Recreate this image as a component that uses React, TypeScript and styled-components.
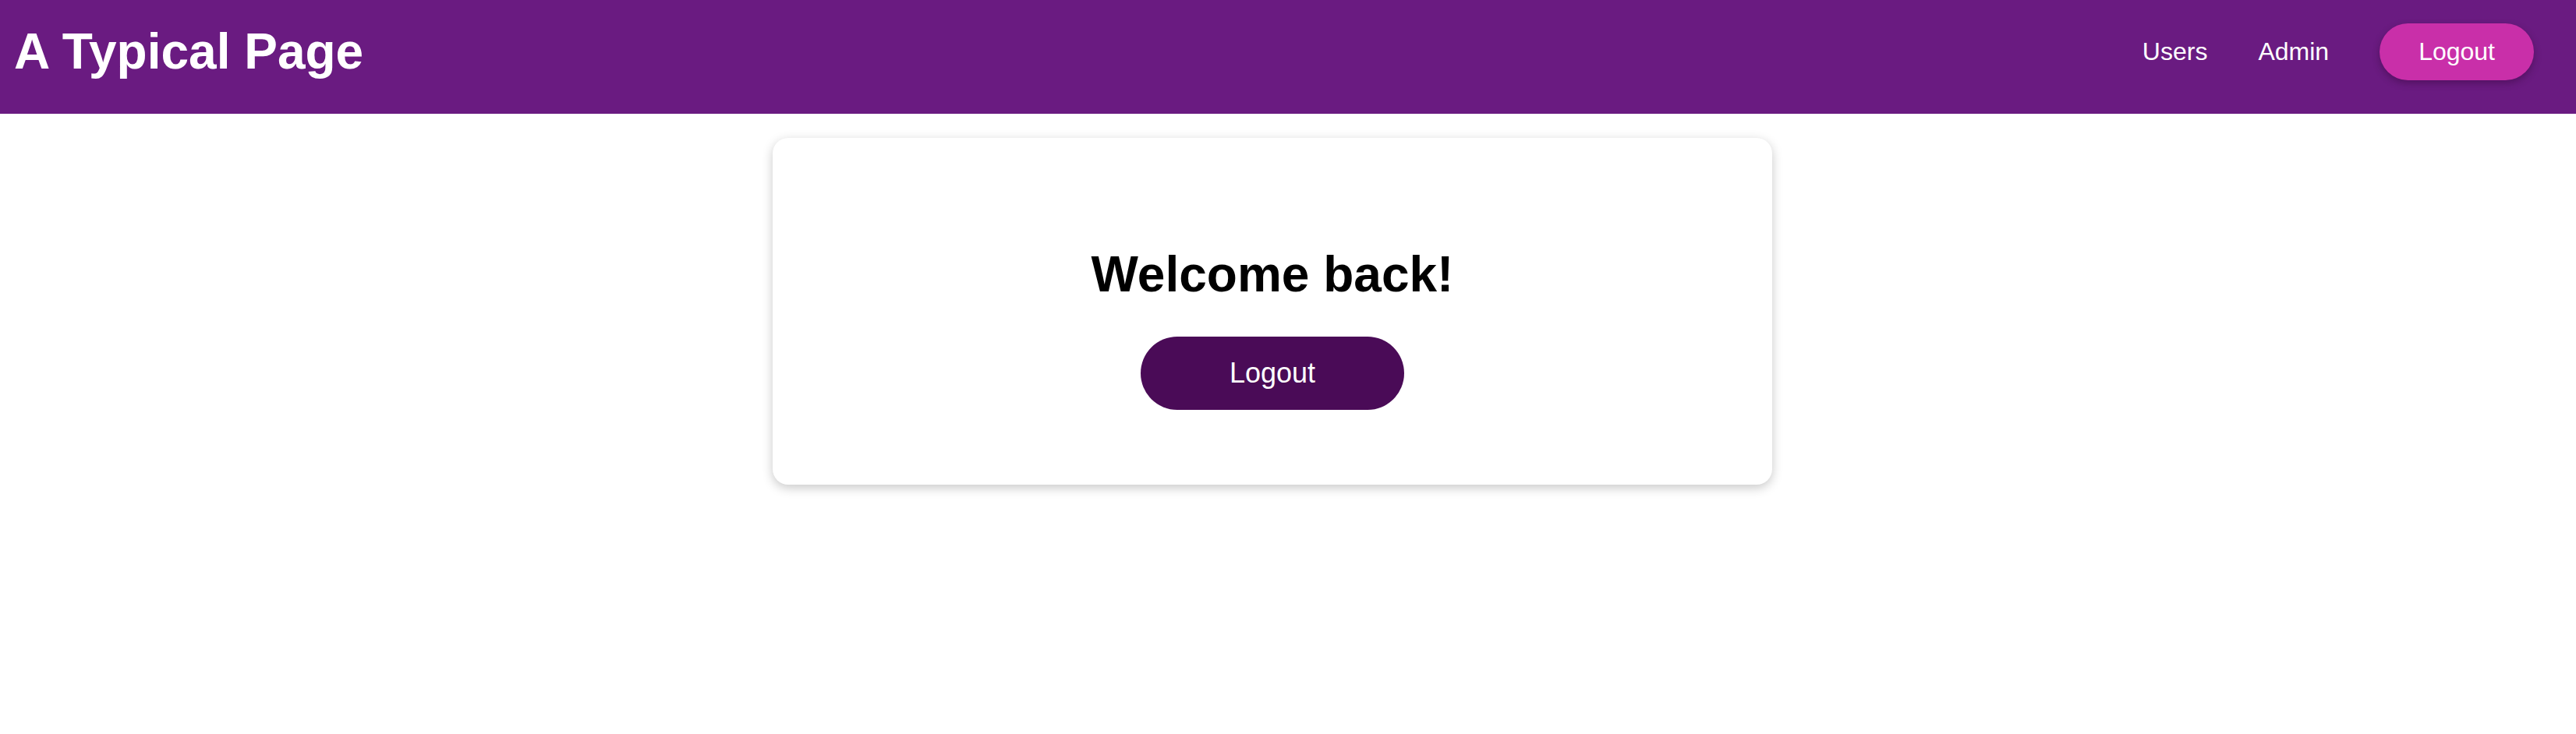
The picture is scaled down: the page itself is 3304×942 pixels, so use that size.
import styled, { createGlobalStyle } from "styled-components";

const GlobalStyle = createGlobalStyle`
    body {
        margin: 0;
        background: #ffffff;
        font-family: "Liberation Sans", Arial, sans-serif;
    }
`

const Page = styled.div`
    min-height: 100vh;
    background: #ffffff;
`

const Header = styled.header`
    height: 146px;
    box-sizing: border-box;
    background-color: #6a1b81;
    display: flex;
    align-items: center;
    justify-content: space-between;
    padding: 0 54px 14px 18px;
    color: #ffffff;
`

const Title = styled.h1`
    margin: 0;
    font-size: 64px;
    font-weight: 700;
`

const Nav = styled.nav`
    display: flex;
    align-items: center;
    gap: 65px;
`

const NavLink = styled.a`
    color: #ffffff;
    text-decoration: none;
    font-size: 32px;
`

const PillButton = styled.button`
    border: none;
    border-radius: 999px;
    background-color: #c92fa9;
    color: #ffffff;
    font-family: inherit;
    font-size: 32px;
    padding: 18px 50px;
    cursor: pointer;
    box-shadow: 0 4px 10px rgba(40, 0, 40, 0.35);
`

const Main = styled.main`
    display: flex;
    justify-content: center;
    padding: 31px 40px 0 0;
`

const Card = styled.section`
    width: 1282px;
    box-sizing: border-box;
    background: #ffffff;
    border-radius: 20px;
    box-shadow: 0 4px 14px rgba(0, 0, 0, 0.22);
    padding: 96px 0;
    display: flex;
    flex-direction: column;
    align-items: center;
`

const Welcome = styled.h2`
    margin: 42px 0 43px;
    font-size: 64px;
    font-weight: 700;
    color: #000000;
`

const LogoutButton = styled.button`
    border: none;
    border-radius: 999px;
    background-color: #4a0b57;
    color: #ffffff;
    font-family: inherit;
    font-size: 36px;
    padding: 26px 114px;
    cursor: pointer;
`

export default function App() {
    return (
        <Page>
            <GlobalStyle />
            <Header>
                <Title>A Typical Page</Title>
                <Nav>
                    <NavLink href="#">Users</NavLink>
                    <NavLink href="#">Admin</NavLink>
                    <PillButton>Logout</PillButton>
                </Nav>
            </Header>
            <Main>
                <Card>
                    <Welcome>Welcome back!</Welcome>
                    <LogoutButton>Logout</LogoutButton>
                </Card>
            </Main>
        </Page>
    )
}
